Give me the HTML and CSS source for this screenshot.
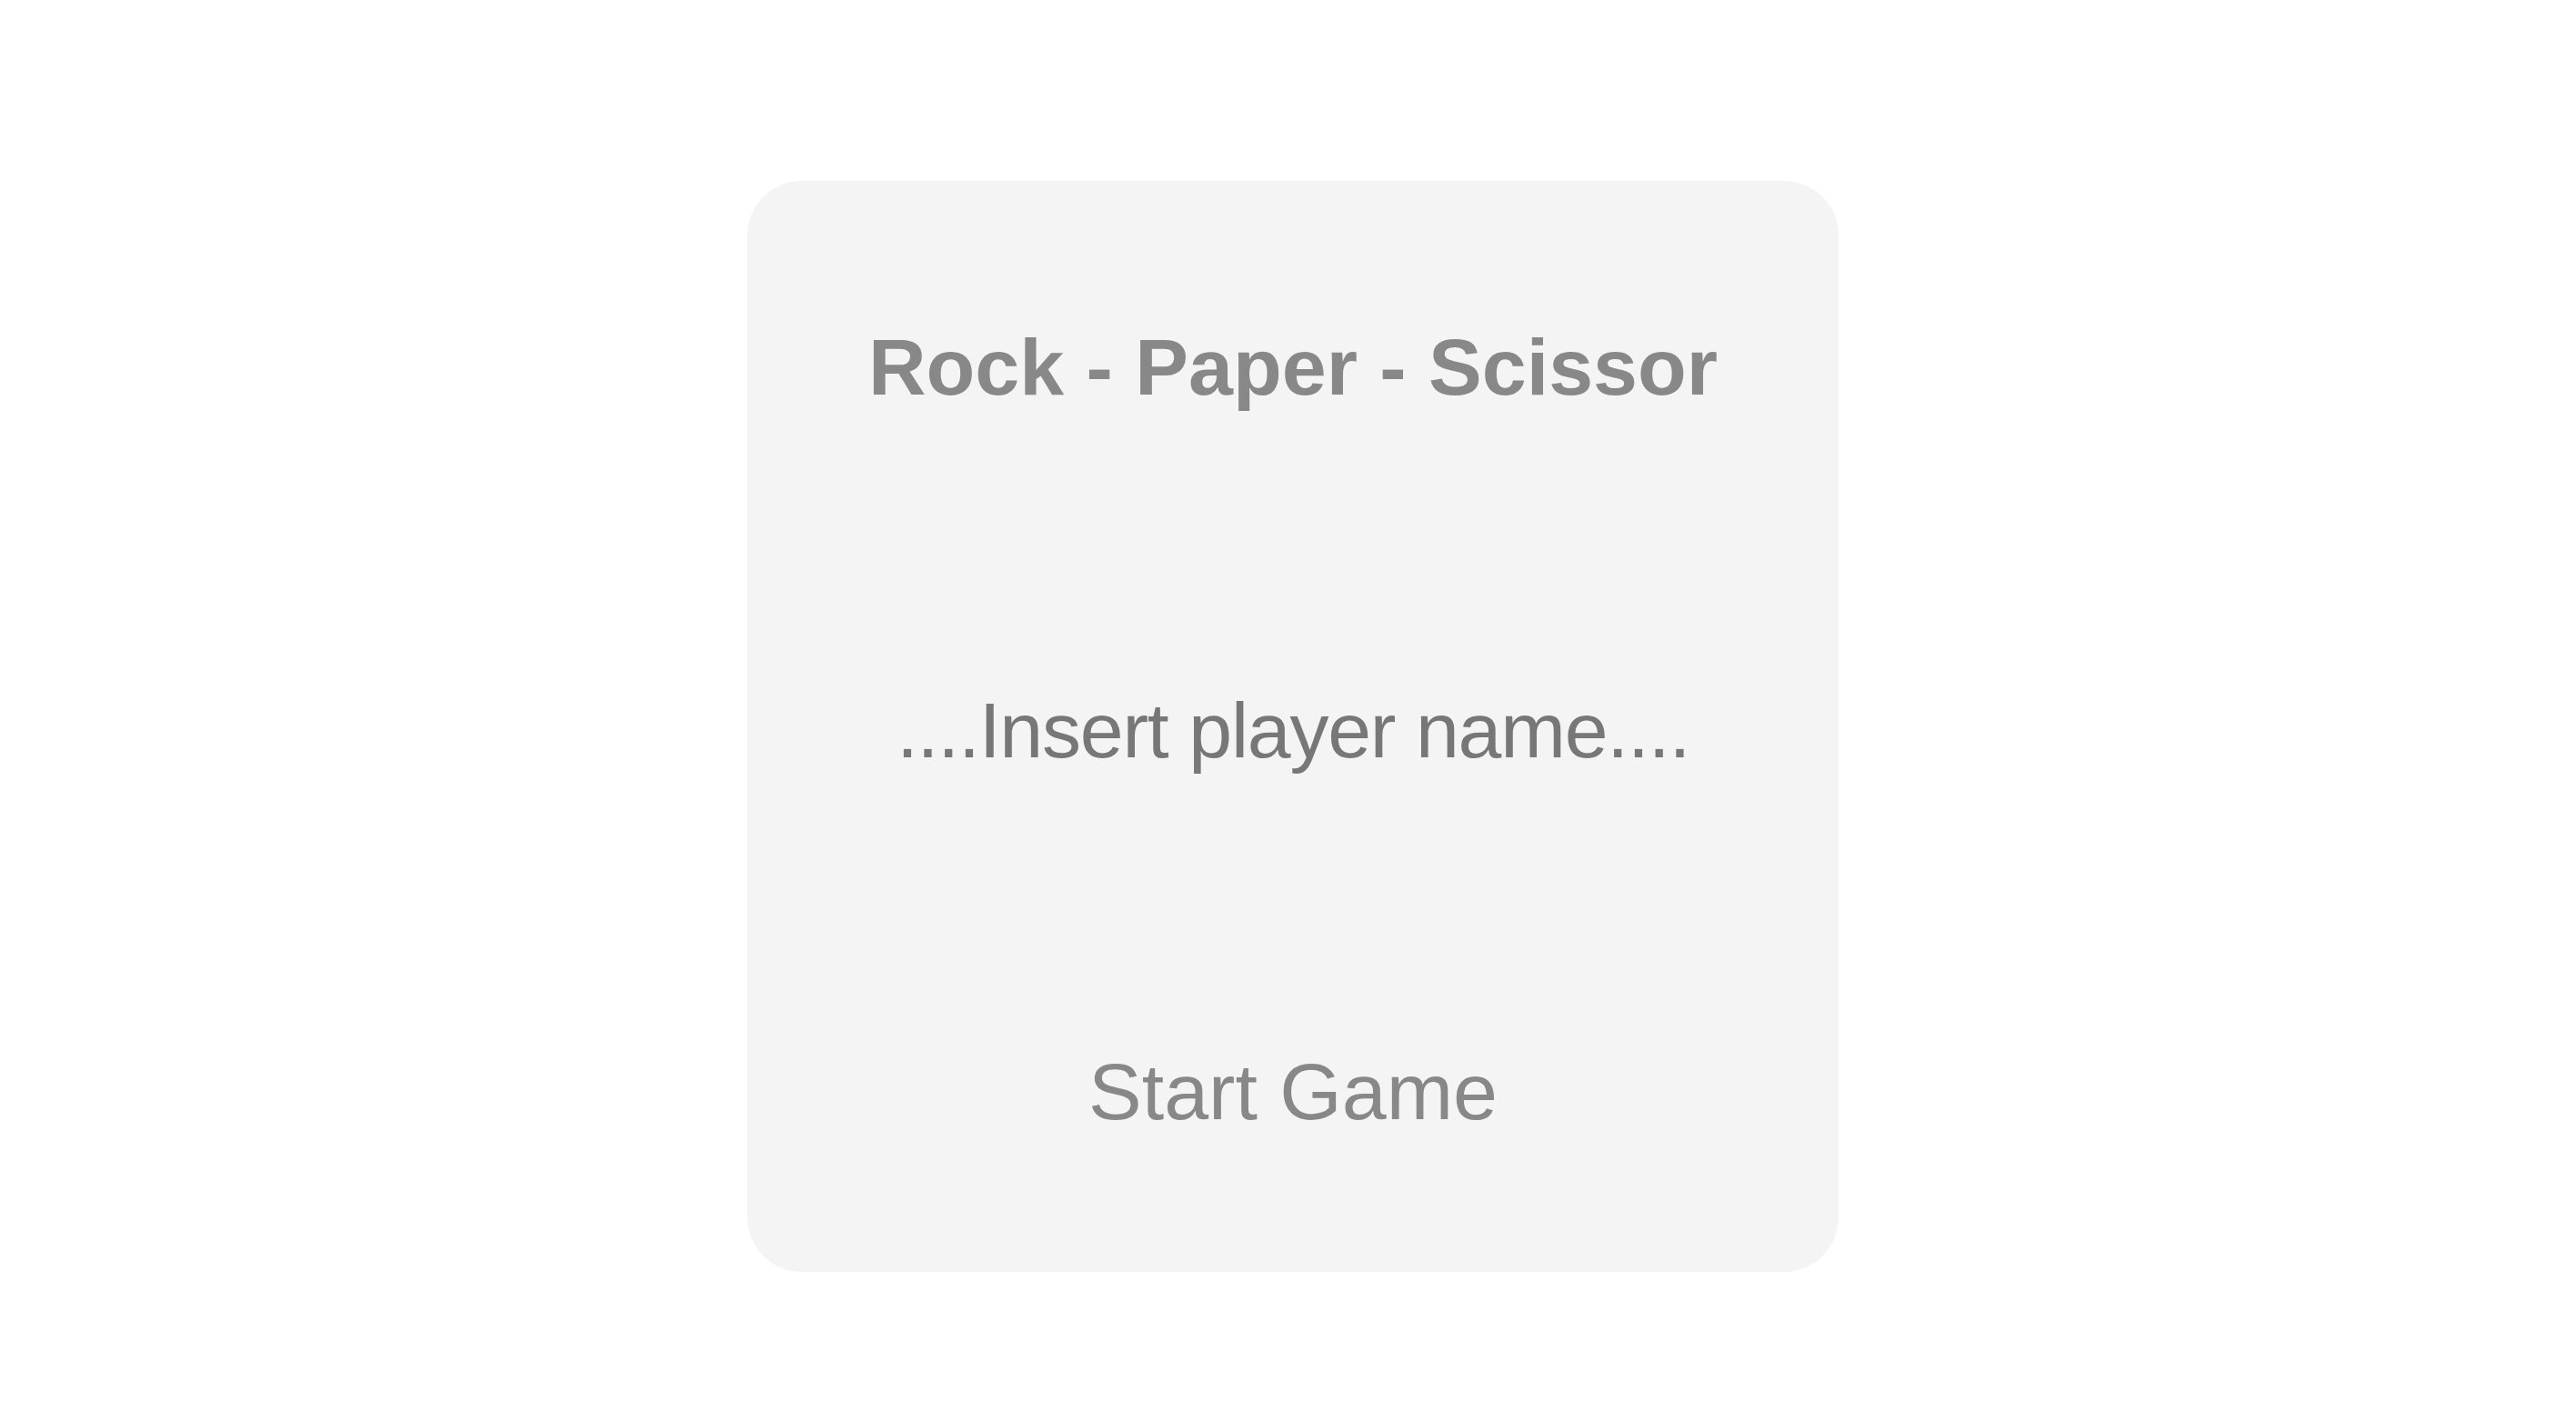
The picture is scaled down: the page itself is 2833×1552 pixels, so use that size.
FILE: index.html
```html
<!DOCTYPE html>
<html lang="en">
<head>
<meta charset="utf-8">
<title>Rock - Paper - Scissor</title>
<link rel="stylesheet" href="styles.css">
</head>
<body>
<main class="page">
  <section class="card">
    <h1 class="title">Rock - Paper - Scissor</h1>
    <div class="player-name">....Insert player name....</div>
    <button class="start-btn" type="button">Start Game</button>
  </section>
</main>
</body>
</html>
```

FILE: styles.css
```css
html, body {
  margin: 0;
  padding: 0;
  background: #ffffff;
}

.page {
  display: flex;
  justify-content: center;
  padding: 199px 0 0 11px;
  font-family: "Liberation Sans", Arial, Helvetica, sans-serif;
}

.card {
  box-sizing: border-box;
  width: 1200px;
  height: 1200px;
  border-radius: 60px;
  background: #f4f4f4;
  display: flex;
  flex-direction: column;
  align-items: center;
  justify-content: space-between;
  padding: 155px 0 148px;
}

.title {
  margin: 0;
  font-size: 88px;
  line-height: 100px;
  font-weight: bold;
  color: #888888;
}

.player-name {
  font-size: 86px;
  line-height: 100px;
  letter-spacing: -1.2px;
  color: #777777;
}

.start-btn {
  margin: 0;
  padding: 0;
  border: 0;
  background: transparent;
  font-family: inherit;
  font-size: 88px;
  line-height: 100px;
  color: #888888;
  cursor: pointer;
}
```
